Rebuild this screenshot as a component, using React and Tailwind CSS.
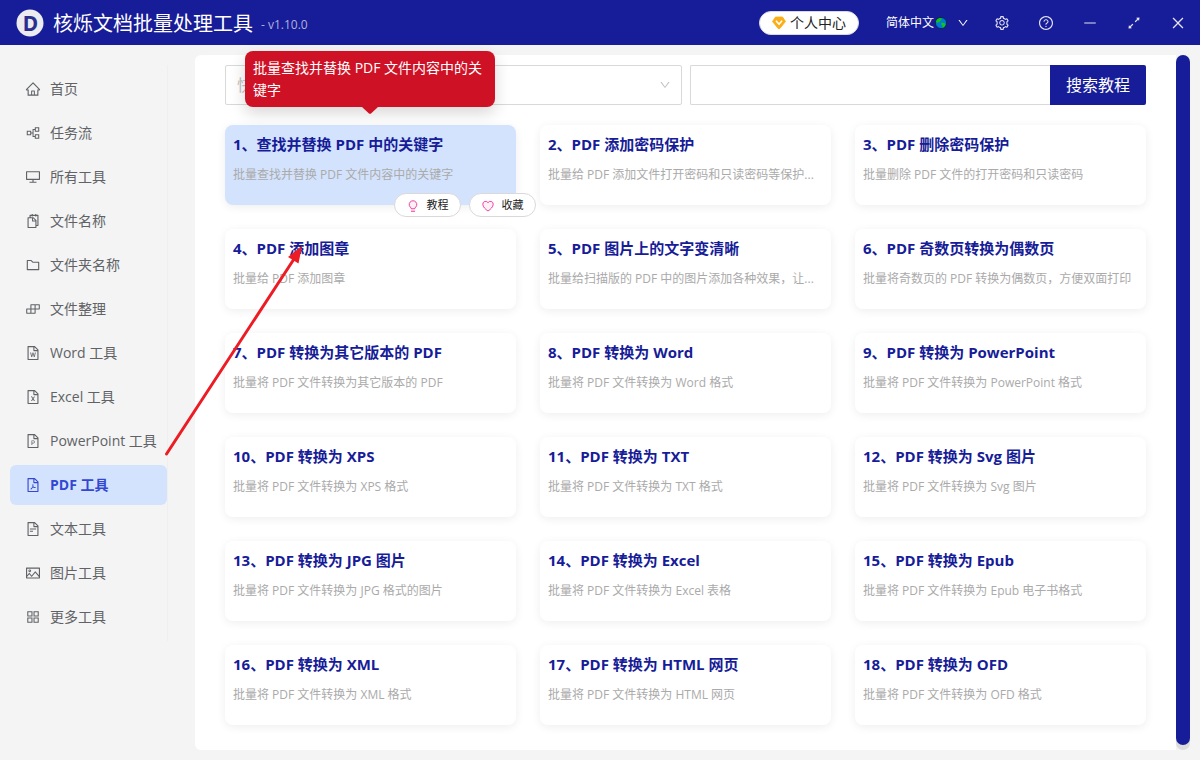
import React, { useState } from "react";
import {
  AiOutlineHome,
  AiOutlinePartition,
  AiOutlineDesktop,
  AiOutlineSnippets,
  AiOutlineFolder,
  AiOutlineBuild,
  AiOutlineFileWord,
  AiOutlineFileExcel,
  AiOutlineFilePpt,
  AiOutlineFilePdf,
  AiOutlineFileText,
  AiOutlinePicture,
  AiOutlineAppstore,
  AiOutlineSetting,
  AiOutlineQuestionCircle,
  AiOutlineMinus,
  AiOutlineExpandAlt,
  AiOutlineClose,
  AiOutlineDown,
} from "react-icons/ai";

const navItems = [
  { name: "首页", icon: AiOutlineHome },
  { name: "任务流", icon: AiOutlinePartition },
  { name: "所有工具", icon: AiOutlineDesktop },
  { name: "文件名称", icon: AiOutlineSnippets },
  { name: "文件夹名称", icon: AiOutlineFolder },
  { name: "文件整理", icon: AiOutlineBuild },
  { name: "Word 工具", icon: AiOutlineFileWord },
  { name: "Excel 工具", icon: AiOutlineFileExcel },
  { name: "PowerPoint 工具", icon: AiOutlineFilePpt },
  { name: "PDF 工具", icon: AiOutlineFilePdf },
  { name: "文本工具", icon: AiOutlineFileText },
  { name: "图片工具", icon: AiOutlinePicture },
  { name: "更多工具", icon: AiOutlineAppstore },
];

const tools = [
  { title: "查找并替换 PDF 中的关键字", desc: "批量查找并替换 PDF 文件内容中的关键字" },
  { title: "PDF 添加密码保护", desc: "批量给 PDF 添加文件打开密码和只读密码等保护..." },
  { title: "PDF 删除密码保护", desc: "批量删除 PDF 文件的打开密码和只读密码" },
  { title: "PDF 添加图章", desc: "批量给 PDF 添加图章" },
  { title: "PDF 图片上的文字变清晰", desc: "批量给扫描版的 PDF 中的图片添加各种效果，让..." },
  { title: "PDF 奇数页转换为偶数页", desc: "批量将奇数页的 PDF 转换为偶数页，方便双面打印" },
  { title: "PDF 转换为其它版本的 PDF", desc: "批量将 PDF 文件转换为其它版本的 PDF" },
  { title: "PDF 转换为 Word", desc: "批量将 PDF 文件转换为 Word 格式" },
  { title: "PDF 转换为 PowerPoint", desc: "批量将 PDF 文件转换为 PowerPoint 格式" },
  { title: "PDF 转换为 XPS", desc: "批量将 PDF 文件转换为 XPS 格式" },
  { title: "PDF 转换为 TXT", desc: "批量将 PDF 文件转换为 TXT 格式" },
  { title: "PDF 转换为 Svg 图片", desc: "批量将 PDF 文件转换为 Svg 图片" },
  { title: "PDF 转换为 JPG 图片", desc: "批量将 PDF 文件转换为 JPG 格式的图片" },
  { title: "PDF 转换为 Excel", desc: "批量将 PDF 文件转换为 Excel 表格" },
  { title: "PDF 转换为 Epub", desc: "批量将 PDF 文件转换为 Epub 电子书格式" },
  { title: "PDF 转换为 XML", desc: "批量将 PDF 文件转换为 XML 格式" },
  { title: "PDF 转换为 HTML 网页", desc: "批量将 PDF 文件转换为 HTML 网页" },
  { title: "PDF 转换为 OFD", desc: "批量将 PDF 文件转换为 OFD 格式" },
];

const windowButtons = [
  { label: "设置", icon: AiOutlineSetting },
  { label: "帮助", icon: AiOutlineQuestionCircle },
  { label: "最小化", icon: AiOutlineMinus },
  { label: "最大化", icon: AiOutlineExpandAlt },
  { label: "关闭", icon: AiOutlineClose },
];

const Logo = () => (
  <svg viewBox="0 0 28 28" className="size-7" aria-hidden="true">
    <circle cx="14" cy="14" r="13.5" fill="#ebebf0" />
    <text
      x="14.5"
      y="21.5"
      textAnchor="middle"
      fontFamily="Noto Sans, sans-serif"
      fontSize="21"
      fontWeight="700"
      fill="#2a2f8f"
    >
      D
    </text>
  </svg>
);

const Gem = () => (
  <svg viewBox="0 0 14 14" className="size-3.5" aria-hidden="true">
    <path
      d="M3.5 1h7L13.5 5.5 7.8 12.5q-.8.8-1.6 0L.5 5.5z"
      fill="#faad14"
      stroke="#faad14"
      strokeWidth="0.8"
      strokeLinejoin="round"
    />
    <path
      d="M4.4 5.2 7 8.3l2.6-3.1"
      fill="none"
      stroke="#fff"
      strokeWidth="1.6"
      strokeLinecap="round"
      strokeLinejoin="round"
    />
  </svg>
);

const Globe = () => (
  <svg viewBox="0 0 14 14" className="size-3.5" aria-hidden="true">
    <circle cx="7" cy="7" r="5.6" fill="#0078d7" stroke="#0b2a4a" />
    <path d="M3 3.6 5.5 2l2.3.4-.6 1.8-1.5 1L6 6.6 4.6 6 3.2 7 2 5.4z" fill="#16c60c" />
    <path d="m7.6 6.6 2.6.3 1.4 1.4-1.2 2.4-1.7 1.2-.5-2.4-1-1.2z" fill="#16c60c" />
  </svg>
);

const Bulb = () => (
  <svg viewBox="0 0 12 12" className="size-3" aria-hidden="true">
    <path
      d="M4.200 8.800V7.900a3.800 3.800 0 1 1 3.600 0v.9z"
      fill="#fff0f6"
      stroke="#eb2f96"
      strokeWidth="0.9"
    />
    <path d="M4 11.200h4" stroke="#eb2f96" strokeWidth="1" />
  </svg>
);

const Heart = () => (
  <svg viewBox="0 0 12 12" className="size-3" aria-hidden="true">
    <path
      d="M6 11C3.500 9.300.8 7 .8 4.200A2.800 2.800 0 0 1 6 2.700a2.800 2.800 0 0 1 5.200 1.500C11.200 7 8.500 9.300 6 11z"
      fill="#fff0f6"
      stroke="#eb2f96"
      strokeWidth="0.9"
      strokeLinejoin="round"
    />
  </svg>
);

const Header = () => (
  <header className="h-[45px] bg-[#171c98] text-white flex items-center justify-between pl-4">
    <div className="flex items-center">
      <Logo />
      <h1 className="ml-[9px] pt-0.5 text-xl leading-6">核烁文档批量处理工具</h1>
      <span className="ml-2 mt-1 text-xs text-[#b0b2dd]">- v1.10.0</span>
    </div>
    <div className="flex items-center">
      <button className="h-6 px-3 mr-[27px] rounded-full bg-white border border-[#d9d9d9] text-sm leading-5 text-[#222] flex items-center gap-1">
        <Gem />
        个人中心
      </button>
      <button className="pt-px text-xs flex items-center mr-[11px]">
        简体中文
        <Globe />
        <AiOutlineDown size={12} className="ml-[9px]" />
      </button>
      {windowButtons.map(({ label, icon: Icon }) => (
        <button
          key={label}
          aria-label={label}
          className="w-11 h-[45px] flex items-center justify-center text-[#e4e4f4]"
        >
          <Icon size={16} />
        </button>
      ))}
    </div>
  </header>
);

const Sidebar = ({ active, onSelect }) => (
  <aside className="w-[195px] shrink-0 pl-2.5 pr-[27px] pt-5">
    <nav className="py-1 border-r border-[#efefef] flex flex-col gap-1">
      {navItems.map(({ name, icon: Icon }) => (
        <a
          key={name}
          href="#"
          onClick={() => onSelect(name)}
          className={`h-10 pl-[15px] flex items-center gap-[9px] rounded-md text-sm whitespace-nowrap ${
            active === name
              ? "bg-[#d3e3fd] text-[#3347d3] font-bold"
              : "text-[#606266]"
          }`}
        >
          <Icon size={16} className="shrink-0" />
          {name}
        </a>
      ))}
    </nav>
  </aside>
);

const SearchBar = () => (
  <form className="flex gap-2" onSubmit={(e) => e.preventDefault()}>
    <div className="flex-1 relative">
      <select
        aria-label="快速搜索"
        defaultValue=""
        className="w-full h-10 pl-[11px] appearance-none rounded-xs border border-[#d9d9d9] bg-white text-base text-[#bfbfbf]"
      >
        <option value="">快速搜索</option>
      </select>
      <AiOutlineDown
        size={12}
        className="absolute right-[11px] top-3.5 text-[#bfbfbf] pointer-events-none"
      />
    </div>
    <div className="flex-1 flex">
      <input
        type="text"
        aria-label="教程关键字"
        className="flex-1 min-w-0 h-10 px-3 rounded-l-xs border border-r-0 border-[#d9d9d9] bg-white text-base"
      />
      <button className="w-24 h-10 rounded-r-xs bg-[#171c98] text-white text-base">
        搜索教程
      </button>
    </div>
  </form>
);

const pillClass =
  "h-6 w-[67px] rounded-full border border-[#d9d9d9] bg-white pt-px text-[11px] text-[#222] flex items-center justify-center gap-2";

const ToolCard = ({ index, tool, selected }) => (
  <article
    className={`relative h-20 min-w-0 px-2 pt-[7px] rounded-lg shadow-[0_2px_10px_rgba(0,0,0,0.07)] ${
      selected ? "bg-[#d3e3fd]" : "bg-white"
    }`}
  >
    <h2 className="text-[15px] leading-6 font-bold text-[#171c98] whitespace-nowrap">
      {index}、{tool.title}
    </h2>
    <p className="mt-[9px] text-xs leading-5 text-[#aaa] truncate">{tool.desc}</p>

    {selected && (
      <>
        {/* Full description */}
        <div
          role="tooltip"
          className="absolute z-20 left-5 bottom-full mb-[18px] w-[250px] px-2 py-1.5 rounded-lg bg-[#cf1126] text-white text-sm leading-[22px] shadow-[0_6px_16px_rgba(0,0,0,0.16)]"
        >
          {tool.desc}
          <svg
            viewBox="0 0 16 7"
            className="absolute left-1/2 top-full -translate-x-1/2 w-4 h-[7px]"
            aria-hidden="true"
          >
            <path d="M0 0h16L9 6.4q-1 .8-2 0z" fill="#cf1126" />
          </svg>
        </div>
        <div className="absolute z-10 -right-5 -bottom-3 flex gap-2">
          <button className={pillClass}>
            <Bulb />
            教程
          </button>
          <button className={pillClass}>
            <Heart />
            收藏
          </button>
        </div>
      </>
    )}
  </article>
);

const App = () => {
  const [active, setActive] = useState("PDF 工具");

  return (
    <div className="relative min-h-screen flex flex-col bg-[#f4f4f4] font-['Open_Sans','Noto_Sans_CJK_SC',sans-serif]">
      <Header />
      <div className="flex-1 flex">
        <Sidebar active={active} onSelect={setActive} />
        <div className="flex-1 min-w-0 flex pt-2.5 pb-2.5 pr-2.5">
          <main className="flex-1 min-w-0 bg-white rounded-l-md px-[30px] pt-2.5 pb-[25px]">
            <SearchBar />
            <div className="mt-5 grid grid-cols-3 gap-6">
              {tools.map((tool, i) => (
                <ToolCard
                  key={tool.title}
                  index={i + 1}
                  tool={tool}
                  selected={i === 0}
                />
              ))}
            </div>
          </main>
          {/* Scroll track */}
          <div className="w-3.5 pb-[5px] flex rounded-full bg-[#dcdcdc]">
            <div className="flex-1 rounded-full bg-[#171c98]" />
          </div>
        </div>
      </div>

      {/* Pointer from the sidebar to the tools */}
      <svg
        viewBox="0 0 140 212"
        className="absolute z-30 left-[164px] top-[245px] w-[140px] h-[212px] pointer-events-none"
        aria-hidden="true"
      >
        <path d="M2.5 209 130 14" stroke="#ed1c24" strokeWidth="3" strokeLinecap="round" />
        <path d="M138 1 124 12 134.5 18.500z" fill="#ed1c24" />
      </svg>
    </div>
  );
};

export default App;
